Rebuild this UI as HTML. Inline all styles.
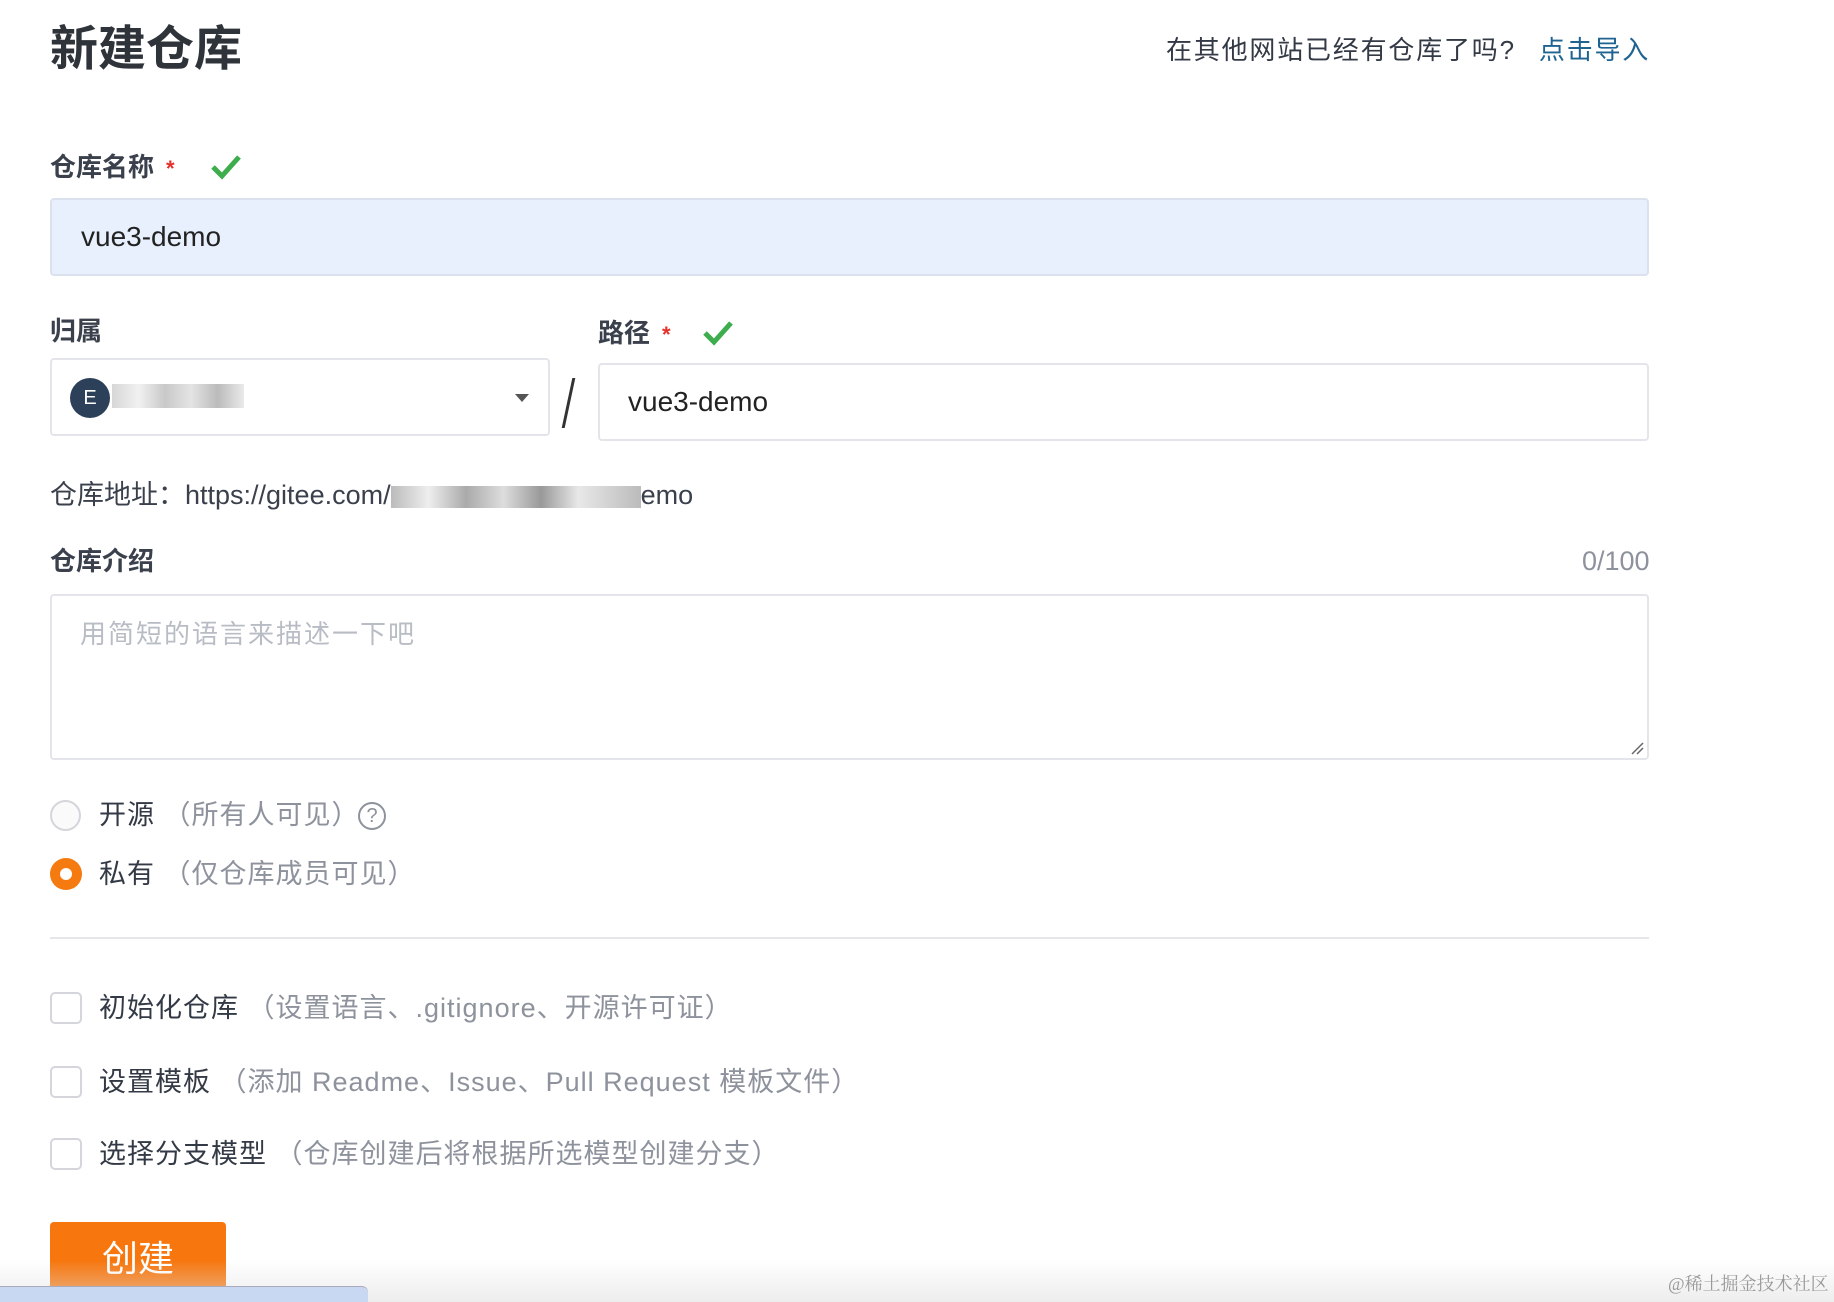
<!DOCTYPE html>
<html><head><meta charset="utf-8"><style>
*{box-sizing:border-box;margin:0;padding:0}
body{width:1834px;height:1302px;overflow:hidden;background:#fff;position:relative;font-family:"Liberation Sans","Noto Sans CJK SC",sans-serif;color:#333a45}
.a{position:absolute;white-space:nowrap}
.lbl{font-size:26px;color:#3a404c;line-height:30px;font-weight:bold}
.star{color:#e5312a;font-size:22px;margin-left:12px}
.box{position:absolute;border:2px solid #e3e5ea;border-radius:4px;background:#fff}
.gray{color:#8d929c}
.rad{position:absolute;width:31px;height:31px;border-radius:50%;border:2px solid #d4d6db;background:#fafafa}
.cb{position:absolute;width:32px;height:32px;border-radius:5px;border:2px solid #d4d6db;background:#fff}
.opt{font-size:27px;line-height:32px;letter-spacing:1px}
</style></head><body>
<div class="a" style="left:50px;top:22px;font-size:48px;font-weight:bold;color:#2f333a;line-height:56px">新建仓库</div>
<div class="a" style="left:1166px;top:34px;font-size:26px;line-height:32px;color:#333a45;letter-spacing:1.8px">在其他网站已经有仓库了吗? <span style="color:#1f6391;margin-left:14px">点击导入</span></div>

<div class="a lbl" style="left:50px;top:152px">仓库名称<span class="star">*</span></div>
<svg class="a" style="left:210px;top:154px" width="32" height="26" viewBox="0 0 32 26"><path d="M3 13 L12 22 L29 3" stroke="#3dad4e" stroke-width="5" fill="none"/></svg>
<div class="box" style="left:50px;top:198px;width:1599px;height:78px;background:#e8f0fe;border-color:#dbe2ee"></div>
<div class="a" style="left:81px;top:220px;font-size:28px;line-height:34px;color:#222">vue3-demo</div>

<div class="a lbl" style="left:50px;top:316px">归属</div>
<div class="a lbl" style="left:598px;top:318px">路径<span class="star">*</span></div>
<svg class="a" style="left:702px;top:320px" width="32" height="26" viewBox="0 0 32 26"><path d="M3 13 L12 22 L29 3" stroke="#3dad4e" stroke-width="5" fill="none"/></svg>
<div class="box" style="left:50px;top:358px;width:500px;height:78px"></div>
<div class="a" style="left:70px;top:378px;width:40px;height:40px;border-radius:50%;background:#2d4059;color:#fff;font-size:20px;line-height:40px;text-align:center">E</div>
<div class="a" style="left:112px;top:384px;width:132px;height:24px;background:linear-gradient(90deg,#ccc,#eee 20%,#bbb 40%,#ddd 60%,#aaa 80%,#e5e5e5);opacity:.8"></div>
<svg class="a" style="left:515px;top:393px" width="14" height="10"><path d="M0 1 L14 1 L7 9Z" fill="#555"/></svg>
<div class="a" style="left:567px;top:378px;width:3px;height:50px;background:#333;transform:skewX(-12deg)"></div>
<div class="box" style="left:598px;top:363px;width:1051px;height:78px"></div>
<div class="a" style="left:628px;top:385px;font-size:28px;line-height:34px;color:#222">vue3-demo</div>

<div class="a" style="left:50px;top:479px;font-size:27px;line-height:32px;color:#3a404c">仓库地址：https://gitee.com/<span style="display:inline-block;width:250px;height:22px;vertical-align:middle;background:linear-gradient(90deg,#bbb,#eee 15%,#aaa 30%,#ddd 45%,#999 60%,#e8e8e8 75%,#bbb)"></span>emo</div>

<div class="a lbl" style="left:50px;top:546px">仓库介绍</div>
<div class="a" style="left:1582px;top:545px;font-size:27px;line-height:32px;color:#8d929c">0/100</div>
<div class="box" style="left:50px;top:594px;width:1599px;height:166px"></div>
<div class="a" style="left:80px;top:618px;font-size:26px;line-height:32px;color:#b8bcc4;letter-spacing:2px">用简短的语言来描述一下吧</div>
<svg class="a" style="left:1630px;top:741px" width="14" height="14"><path d="M2 13 L13 2 M7 13 L13 7" stroke="#666" stroke-width="1.5"/></svg>

<div class="rad" style="left:50px;top:800px"></div>
<div class="a opt" style="left:99px;top:799px">开源 <span class="gray">（所有人可见）</span></div>
<div class="a" style="left:358px;top:802px;width:28px;height:28px;border-radius:50%;border:2px solid #8d929c;color:#8d929c;font-size:20px;line-height:24px;text-align:center">?</div>
<div class="a" style="left:50px;top:858px;width:32px;height:32px;border-radius:50%;background:#f57a0f"></div>
<div class="a" style="left:60px;top:868px;width:12px;height:12px;border-radius:50%;background:#fff"></div>
<div class="a opt" style="left:99px;top:858px">私有 <span class="gray">（仅仓库成员可见）</span></div>

<div class="a" style="left:50px;top:937px;width:1599px;height:2px;background:#e5e6ea"></div>

<div class="cb" style="left:50px;top:992px"></div>
<div class="a opt" style="left:99px;top:992px">初始化仓库 <span class="gray">（设置语言、.gitignore、开源许可证）</span></div>
<div class="cb" style="left:50px;top:1066px"></div>
<div class="a opt" style="left:99px;top:1066px">设置模板 <span class="gray">（添加 Readme、Issue、Pull Request 模板文件）</span></div>
<div class="cb" style="left:50px;top:1138px"></div>
<div class="a opt" style="left:99px;top:1138px">选择分支模型 <span class="gray">（仓库创建后将根据所选模型创建分支）</span></div>

<div class="a" style="left:50px;top:1222px;width:176px;height:80px;background:#f7760d;border-radius:4px 4px 0 0"></div>
<div class="a" style="left:102px;top:1238px;font-size:36px;line-height:42px;color:#fff">创建</div>
<div class="a" style="left:0;top:1260px;width:1834px;height:42px;background:linear-gradient(180deg,rgba(235,235,235,0),rgba(225,225,225,.6))"></div>
<div class="a" style="left:0;top:1286px;width:368px;height:16px;background:#c9d8f2;border-radius:0 6px 0 0;border-top:1px solid #aab"></div>
<div class="a" style="left:1668px;top:1272px;font-size:18px;line-height:24px;color:#999;font-family:'Liberation Serif','Noto Serif CJK SC',serif">@稀土掘金技术社区</div>
</body></html>
